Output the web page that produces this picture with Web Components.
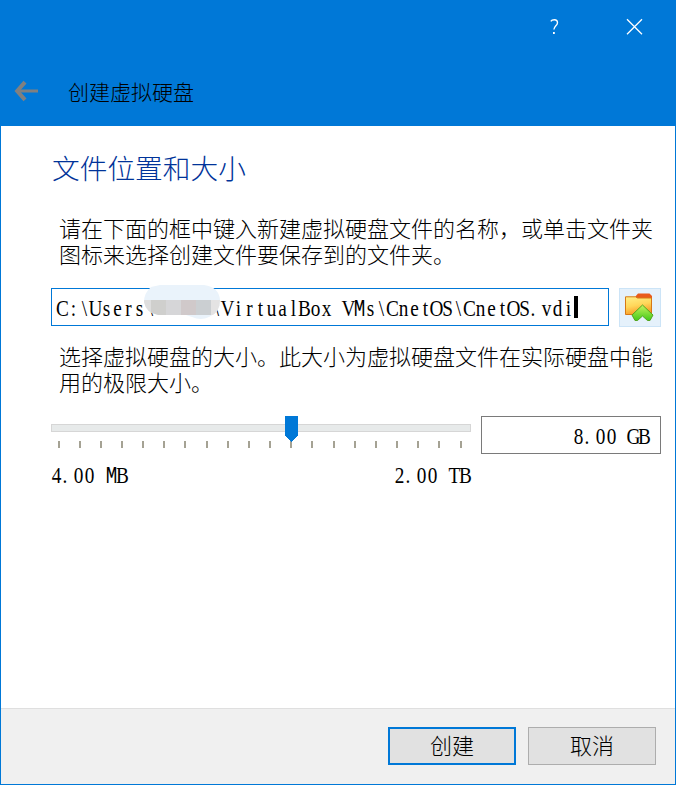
<!DOCTYPE html>
<html lang="zh-CN">
<head>
<meta charset="utf-8">
<title>创建虚拟硬盘</title>
<style>
html,body{margin:0;height:100%;overflow:hidden}
body{font:300 22px/26px "Noto Sans CJK SC",sans-serif;color:#000}
</style>
</head>
<body>
<wizard-window>
  <title-bar slot="header">创建虚拟硬盘</title-bar>
  <wizard-page heading="文件位置和大小">
    <hint-text>请在下面的框中键入新建虚拟硬盘文件的名称，或单击文件夹<br>图标来选择创建文件要保存到的文件夹。</hint-text>
    <path-row></path-row>
    <hint-text style="margin-top:15px">选择虚拟硬盘的大小。此大小为虚拟硬盘文件在实际硬盘中能<br>用的极限大小。</hint-text>
    <size-row></size-row>
  </wizard-page>
  <push-button slot="footer" primary>创建</push-button>
  <push-button slot="footer">取消</push-button>
</wizard-window>
<script>
const define = (name, html, setup) => customElements.define(name, class extends HTMLElement {
  constructor() {
    super();
    this.attachShadow({mode: 'open'}).innerHTML = html;
  }
  connectedCallback() { if (setup) setup(this, this.shadowRoot); }
});

// Serif text with every character centred in an 11px cell; the wide M uses a monospace face.
define('cell-text', `<style>:host{display:block;flex:none;height:26px}svg{display:block;overflow:visible}
text{font:400 23.5px "Liberation Serif",serif;text-anchor:middle;fill:#000}
tspan{font-family:"Liberation Mono",monospace}</style>
<svg height="26"><text y="21" xml:space="preserve" transform="scale(.82 1)"></text></svg>`, (el, root) => {
  const s = el.getAttribute('value');
  root.querySelector('svg').setAttribute('width', s.length * 11);
  const t = root.querySelector('text');
  t.setAttribute('x', [...s].map((c, i) => ((i * 11 + (c === '.' ? 3 : 5.5)) / .82).toFixed(2)).join(' '));
  t.innerHTML = s.replace(/M/g, '<tspan>M</tspan>');
});

define('wizard-window', `<style>
:host{display:flex;flex-direction:column;box-sizing:border-box;width:676px;height:785px;border:1px solid #0078d7;background:#fff}
main{flex:1;min-height:0}
footer{box-sizing:border-box;height:76px;background:#f0f0f0;border-top:1px solid #dfdfdf;display:flex;justify-content:flex-end;gap:12px;padding:18px 19px 0 0}
</style><slot name="header"></slot><main><slot></slot></main><footer><slot name="footer"></slot></footer>`);

define('title-bar', `<style>
:host{display:flex;flex-direction:column;height:125px;background:#0078d7}
.controls{display:flex;justify-content:flex-end;height:52px;align-items:center}
.controls svg{width:80px;height:52px}
.caption{display:flex;align-items:center;height:54px;padding:13px 0 0 13px;box-sizing:border-box;gap:29px;font-size:21px;line-height:26px;margin-top:4px}
.caption svg{margin-top:1px}
svg{display:block;flex:none;fill:none}
</style>
<div class="controls">
<svg viewBox="0 0 80 52" stroke="#fff" stroke-width="1.35"><path d="M35.8 20.4C36.5 19.2 38 18.7 39.4 18.7C41.4 18.7 42.5 19.8 42.5 21.7C42.5 24.4 38.9 25.2 38.9 28.6"/><path d="M38.9 31v2" stroke-width="1.8"/></svg>
<svg viewBox="0 0 80 52" stroke="#fff" stroke-width="1.3"><path d="M32 18.2l15 15M47 18.2l-15 15"/></svg>
</div>
<div class="caption"><svg width="25" height="22" stroke="#808080"><path d="M3 11H24" stroke-width="3"/><path d="M11 2.2L3.2 11l7.8 8.8" stroke-width="4"/></svg><span><slot></slot></span></div>`);

define('wizard-page', `<style>
:host{display:block;padding:22px 14px 0 50px}
h1{font:inherit;font-size:27.7px;line-height:38px;color:#039;margin:0 0 28px 1px}
</style><h1></h1><slot></slot>`, (el, root) => root.querySelector('h1').textContent = el.getAttribute('heading'));

define('hint-text', `<style>:host{display:block;padding-left:8px;white-space:nowrap}</style><slot></slot>`);

define('path-row', `<style>
:host{display:flex;gap:10px;margin-top:22px;height:39px}
.field{position:relative;box-sizing:border-box;width:558px;height:38px;border:1px solid #0078d7;padding:6px 5px;display:flex}
.caret{width:4px;height:22px;background:#000;margin:1px 0 0}
.mask{position:absolute;left:91px;top:-4px}
.browse{box-sizing:border-box;width:42px;height:39px;background:#e5f1fb;border:1px solid #cce4f7;display:grid;place-items:center}
</style>
<div class="field"><cell-text value="C:\\Users\\     \\VirtualBox VMs\\CnetOS\\CnetOS.vdi"></cell-text><span class="caret"></span>
<svg class="mask" width="80" height="36"><defs><clipPath id="m"><path d="M8 2L17 0H61Q76 2 77 15Q77 28 66 32Q58 36 49 32L43 30H15Q3 28 1 17Q1 8 8 2Z"/></clipPath></defs>
<g clip-path="url(#m)"><path fill="#eaf3fb" d="M0 0H80V36H0z"/><path fill="#dedede" d="M0 15H8V30H0z"/><path fill="#cfcfcd" d="M8 15H23V30H8z"/><path fill="#d6d6d8" d="M23 15H38V30H23z"/><path fill="#d0c9ca" d="M38 15H53V30H38z"/><path fill="#cbcfd2" d="M53 15H68V30H53z"/><path fill="#e4e3e3" d="M68 15H80V30H68z"/></g></svg></div>
<div class="browse"><svg width="30" height="30" style="display:block;margin:-1px 2px 0 0">
<defs><linearGradient id="f" x2=".3" y2="1"><stop stop-color="#fff08a"/><stop offset=".55" stop-color="#ffd75a"/><stop offset="1" stop-color="#f99b28"/></linearGradient><linearGradient id="g" x2="0" y2="1"><stop stop-color="#c5f45d"/><stop offset="1" stop-color="#44c91b"/></linearGradient></defs>
<path d="M11 5L14 1.5H25.5L28 4V13H11z" fill="#e95b1b"/><path d="M1.5 4.8H11.5L13.5 6H27.5V22.5H1.5z" fill="url(#f)" stroke="#d67915"/><path d="M18.5 13L29 23L26 28.5H23.5L18.5 24L13.5 28.5H11L8 23z" fill="url(#g)" stroke="#53a51f"/></svg></div>`);

define('size-row', `<style>
:host{display:flex;gap:10px;margin-top:22px}
.slider{width:420px}
svg{display:block}
.range{display:flex;justify-content:space-between;margin-top:10px}
.value{box-sizing:border-box;width:180px;height:38px;border:1px solid #7a7a7a;padding:6px 10px;display:flex;justify-content:flex-end}
</style>
<div class="slider"><svg width="420" height="36" shape-rendering="crispEdges"><rect x=".5" y="8.5" width="419" height="7" fill="#e7eaea" stroke="#d6d6d6"/><g id="ticks" fill="#a5a294"></g><path d="M234 0H247V19.5L240.5 26L234 19.5z" fill="#0078d7"/></svg>
<div class="range"><cell-text value="4.00 MB"></cell-text><cell-text value="2.00 TB"></cell-text></div></div>
<div class="value"><cell-text value="8.00 GB"></cell-text></div>`, (el, root) => {
  let s = '';
  for (let i = 0; i < 20; i++) s += `<rect x="${Math.floor(7 + i * 402 / 19)}" y="25" width="2" height="7"/>`;
  root.getElementById('ticks').innerHTML = s;
});

define('push-button', `<style>
:host{display:block}
button{font:inherit;color:inherit;box-sizing:border-box;width:128px;height:38px;margin:0;padding:0 0 4px;background:#e1e1e1;border:1px solid #adadad;border-radius:0}
:host([primary]) button{border:2px solid #0078d7}
</style><button><slot></slot></button>`);
</script>
</body>
</html>
